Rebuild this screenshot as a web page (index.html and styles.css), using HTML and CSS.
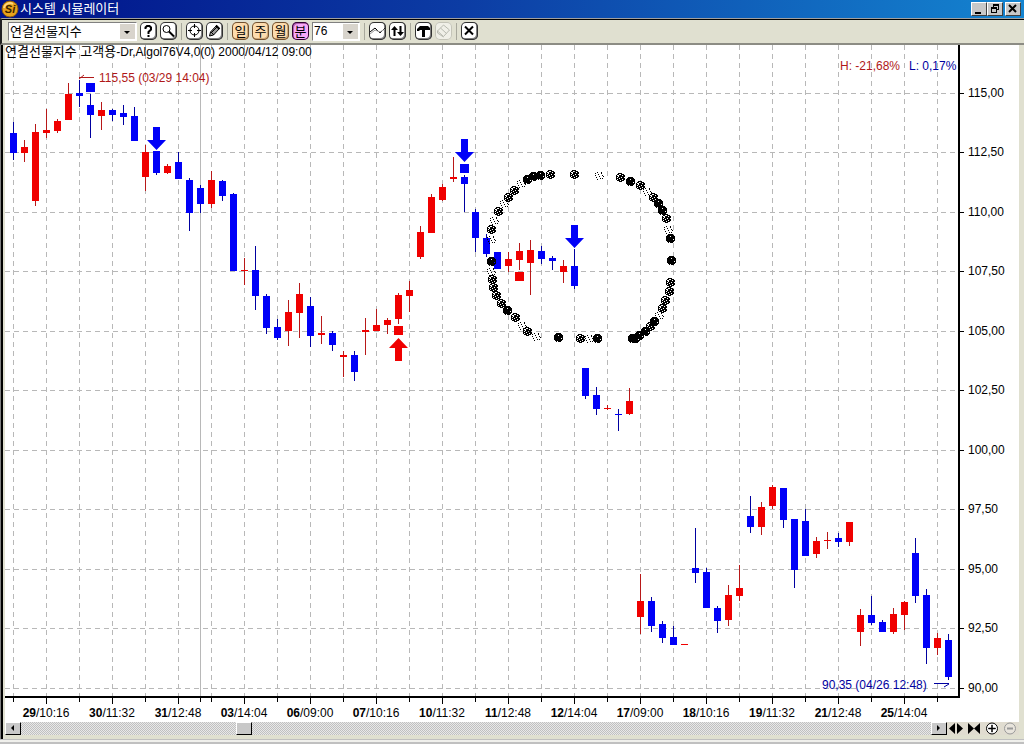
FILE: index.html
```html
<!DOCTYPE html>
<html lang="ko">
<head>
  <meta charset="UTF-8" />
  <meta name="viewport" content="width=device-width, initial-scale=1.0" />
  <title>시스템 시뮬레이터</title>
  <link rel="stylesheet" href="styles.css">
</head>
<body>
  <div class="window">
    <header class="titlebar">
      <svg class="logo" viewBox="0 0 18 18" aria-hidden="true">
        <circle cx="9" cy="9" r="8" fill="#e8a21c" stroke="#8a5a10" />
        <path d="M3 8a6 6 0 0 1 9-4" fill="none" stroke="#ffd97a" stroke-width="2" />
        <text x="9" y="13" text-anchor="middle" class="logo-text">Si</text>
      </svg>
      <h1>시스템 시뮬레이터</h1>
      <div class="window-buttons">
        <button type="button" aria-label="최소화"><svg viewBox="0 0 14 12"><path d="M3 9h6v2h-6z" /></svg></button>
        <button type="button" aria-label="이전 크기로"><svg viewBox="0 0 14 12"><path d="M5 1h6v6h-2v-1h1v-3h-4v1h-1zM3 4h6v6h-6zM4 6v3h4v-3z" fill-rule="evenodd" /></svg></button>
        <button type="button" class="close" aria-label="닫기"><svg viewBox="0 0 14 12"><path d="M3 2l7 7M10 2l-7 7" stroke="#000" stroke-width="2" /></svg></button>
      </div>
    </header>

    <div class="toolbar">
      <div class="combo combo-symbol">
        <select aria-label="종목"><option>연결선물지수</option></select>
      </div>
      <button type="button" class="tool" aria-label="도움말"><svg viewBox="0 0 17 18"><path d="M5.500 7V5.500L7 4h2.500L11 5.500v2L8.500 10v2M8.500 13v2" fill="none" stroke="#000" stroke-width="2" /></svg></button>
      <button type="button" class="tool" aria-label="찾기"><svg viewBox="0 0 17 18"><circle cx="6.500" cy="7" r="3.500" fill="#fff" stroke="#000" /><path d="M9 9.500l5 5" stroke="#000" stroke-width="2" /></svg></button>
      <span class="divider"></span>
      <button type="button" class="tool" aria-label="십자선"><svg viewBox="0 0 17 18"><circle cx="8.500" cy="8.500" r="4.500" fill="none" stroke="#000" /><path d="M8.500 2v4M8.500 11v4M2 8.500h4M11 8.500h4" stroke="#000" /></svg></button>
      <button type="button" class="tool" aria-label="그리기"><svg viewBox="0 0 17 18"><path d="M3.500 14l1-4 6-6.500 3 3-6 6.500z" fill="#999" stroke="#000" /><path d="M5 10l3 3M6 10l5-5" stroke="#000" /><path d="M10 3.500l3.500 3.500" stroke="#000" stroke-width="2" /></svg></button>
      <span class="divider"></span>
      <button type="button" class="tool period">일</button>
      <button type="button" class="tool period">주</button>
      <button type="button" class="tool period">월</button>
      <button type="button" class="tool period active" aria-pressed="true">분</button>
      <div class="combo combo-minute">
        <select aria-label="분 주기"><option>76</option></select>
      </div>
      <span class="divider"></span>
      <button type="button" class="tool" aria-label="지표"><svg viewBox="0 0 17 18"><path d="M1 10l5-4 5 5 5-5" fill="none" stroke="#000" /><path d="M1 12l5-4 5 2 5-3" fill="none" stroke="#999" /></svg></button>
      <button type="button" class="tool" aria-label="매매 신호"><svg viewBox="0 0 17 18"><path d="M2 8l3.500-4 3.500 4h-2.500v6h-2v-6zM8 10l3.500 4 3.500-4h-2.500v-6h-2v6z" /></svg></button>
      <span class="divider"></span>
      <button type="button" class="tool" aria-label="시스템"><svg viewBox="0 0 17 18"><path d="M2 7l3-3h8l2 2v2h-5v7h-3v-7h-2l-1 1h-2z" /></svg></button>
      <button type="button" class="tool" aria-label="지우기" disabled><svg viewBox="0 0 17 18"><path d="M2.500 9l6-6 6 5-6 6.500zM5.500 6l6 5.500M2.500 9v2l6 4" fill="none" stroke="#b8bab0" /></svg></button>
      <span class="divider"></span>
      <button type="button" class="tool" aria-label="차트 닫기"><svg viewBox="0 0 17 18"><path d="M4 4.500l8 8M12 4.500l-8 8" stroke="#000" stroke-width="2" /></svg></button>
    </div>

    <main class="panel">
      <svg id="chart" class="chart" viewBox="5 45 1014 677" role="img" aria-label="연결선물지수 76분 차트"></svg>
      <div class="scrollbar">
        <button type="button" class="scroll-btn" aria-label="왼쪽"><svg viewBox="0 0 14 11"><path d="M8 2v6l-3-3z" /></svg></button>
        <input type="range" min="0" max="100" value="24" aria-label="차트 위치">
        <button type="button" class="scroll-btn" aria-label="오른쪽"><svg viewBox="0 0 14 11"><path d="M5 2v6l3-3z" /></svg></button>
        <button type="button" class="zoom-btn" aria-label="간격 넓게"><svg viewBox="0 0 18 13"><path d="M8 1v11l-6-5.500zM10 1v11l6-5.500z" /></svg></button>
        <button type="button" class="zoom-btn" aria-label="간격 좁게"><svg viewBox="0 0 18 13"><path d="M3 1v11l6-5.500zM15 1v11l-6-5.500z" /></svg></button>
        <button type="button" class="zoom-btn" aria-label="확대"><svg viewBox="0 0 18 13"><circle cx="9" cy="6.500" r="5.500" fill="#fff" stroke="#000" /><path d="M8.500 3h1v7h-1zM5.500 6h7v1h-7z" stroke="#000" stroke-width=".5" /></svg></button>
        <button type="button" class="zoom-btn" aria-label="축소" disabled><svg viewBox="0 0 18 13"><circle cx="9" cy="6.500" r="5.500" fill="#e8e4dc" stroke="#999" /><path d="M6 5.500h6v2h-6z" fill="#999" /></svg></button>
      </div>
    </main>
  </div>
  <script src="chart.js"></script>
</body>
</html>
```

FILE: styles.css
```css
* {
  box-sizing: border-box;
}
body {
  margin: 0;
  background: #c0c0c0;
  font-family: "Liberation Sans", "Noto Sans CJK KR", sans-serif;
  font-size: 12px;
  color: #000;
}
button {
  padding: 0;
  font: inherit;
  color: inherit;
}
button svg {
  display: block;
  width: 100%;
  height: 100%;
}
.window {
  background: #f0f0ec;
  border-bottom: 2px solid #c0c0c0;
}

/* title bar */
.titlebar {
  display: flex;
  align-items: center;
  height: 18px;
  padding: 0 3px 0 1px;
  background: linear-gradient(90deg, #00128a, #0c3ca4 45%, #1484d0);
}
.logo {
  width: 18px;
  height: 18px;
}
.logo-text {
  font-size: 11px;
  font-weight: bold;
  font-style: italic;
  fill: #3a2400;
}
.titlebar h1 {
  flex: 1;
  margin: 0 0 0 1px;
  font-size: 13px;
  font-weight: normal;
  line-height: 18px;
  color: #fff;
}
.window-buttons {
  display: flex;
}
.window-buttons button {
  width: 16px;
  height: 14px;
  background: #c8c8c8;
  border: 1px solid;
  border-color: #fff #404040 #404040 #fff;
}
.window-buttons .close {
  margin-left: 2px;
}

/* toolbar */
.toolbar {
  display: flex;
  align-items: center;
  gap: 3px;
  height: 27px;
  padding: 0 7px 0 6px;
  border-top: 1px solid #a0a0a0;
  border-bottom: 2px solid #8c8c84;
  border-left: 2px solid #202020;
  background: #e0e0d0;
  box-shadow: inset 0 1px #000;
}
.combo {
  position: relative;
  height: 19px;
  background: #fff;
  border: 1px solid;
  border-color: #808080 #fff #fff #808080;
}
.combo-symbol {
  width: 129px;
}
.combo-minute {
  width: 48px;
}
.combo select {
  appearance: none;
  width: 100%;
  height: 17px;
  padding: 0 18px 0 1px;
  border: 0;
  background: none;
  font: inherit;
  line-height: 17px;
  color: #000;
}
.combo-symbol select {
  font-size: 13px;
}
.combo::before {
  content: "";
  position: absolute;
  top: 1px;
  right: 1px;
  bottom: 1px;
  width: 15px;
  background: #d8d4cc;
}
.combo::after {
  content: "";
  position: absolute;
  top: 8px;
  right: 6px;
  border: 3px solid transparent;
  border-top-color: #000;
  border-bottom: 0;
  pointer-events: none;
}
.tool {
  width: 17px;
  height: 18px;
  background: #fff;
  border: 0;
  border-radius: 5px;
  box-shadow: inset 0 0 0 1px #303030, inset -1px -1px 0 1px #808080;
}
.tool:disabled {
  background: #f0f0e8;
  box-shadow: inset 0 0 0 1px #c4c4b8;
}
.period {
  font-size: 13px;
  line-height: 17px;
  background: #fddcae;
  box-shadow: inset 0 0 0 1px #705030, inset -1px -1px 0 1px #d0a878;
}
.period.active {
  background: #f8a8f8;
  box-shadow: inset 0 0 0 1px #300030, inset 1px 1px 0 1px #b060b0;
}
.divider {
  width: 1px;
  height: 17px;
  margin: 0 1px;
  background: #a8a89c;
}

/* chart */
.panel {
  background: #fff;
  margin-bottom: 3px;
  border-left: 5px solid #e0e0d0;
  border-right: 5px solid #e0e0d8;
  border-bottom: 4px solid #e0e0d8;
  box-shadow: inset 0 -1px #fff, 0 1px #c0c0c0;
  background-clip: padding-box;
  border-image: linear-gradient(90deg, #808080 1px, #000 1px 3px, #e0e0d0 3px) 1 5 4 5;
}
.chart {
  display: block;
  width: 100%;
  background: #fff;
  font-size: 12px;
}
.grid {
  stroke: #b8b8b8;
  stroke-dasharray: 5 4;
  fill: none;
}
.cursor {
  stroke: #b8b8b8;
}
.axis {
  stroke: #000;
  stroke-width: 2;
}
.tick {
  stroke: #000;
}
.up {
  fill: #f00000;
}
.down {
  fill: #0000f8;
}
.wick-up {
  fill: #b81818;
}
.wick-down {
  fill: #0000a0;
}
.day {
  font-weight: bold;
}
.korean {
  font-size: 13px;
}
.middle {
  text-anchor: middle;
}
.note-high {
  fill: #b01818;
}
.note-low {
  fill: #0000a0;
}
.pointer-high {
  stroke: #b01818;
  fill: none;
}
.pointer-low {
  stroke: #0000a0;
  fill: none;
}

/* scrollbar */
.scrollbar {
  display: flex;
  height: 13px;
  background: #e0dcd0;
}
.scroll-btn {
  width: 16px;
  height: 13px;
  background: #c8c8c8;
  border: 1px solid;
  border-color: #fff #000 #000 #fff;
}
.scrollbar input {
  appearance: none;
  flex: 1;
  min-width: 0;
  height: 13px;
  margin: 0;
  background: repeating-conic-gradient(#c0c0c0 0 25%, #e8e8e8 0 50%) 0 0 / 2px 2px;
}
.scrollbar input::-webkit-slider-thumb {
  appearance: none;
  width: 16px;
  height: 13px;
  background: #c8c8c8;
  border: 1px solid;
  border-color: #fff #000 #000 #fff;
}
.zoom-btn {
  width: 18px;
  height: 13px;
  background: none;
  border: 0;
}
```

FILE: chart.js
```js
// [open/close top, bottom, high, low, direction] in chart units, one bar every 11 units
const bars = [
  [133, 153, 122, 160, 'd'], [147, 153, 140, 162, 'u'], [132, 201, 124, 206, 'u'], [130, 133, 109, 138, 'u'],
  [121, 131, 119, 133, 'u'], [94, 120, 83, 120, 'u'], [93, 96, 80, 107, 'd'], [105, 115, 94, 138, 'd'],
  [110, 116, 102, 130, 'u'], [110, 115, 109, 121, 'd'], [113, 117, 105, 125, 'd'], [116, 141, 107, 141, 'd'],
  [152, 177, 145, 191, 'u'], [151, 173, 151, 175, 'd'], [166, 173, 164, 174, 'u'], [162, 179, 152, 179, 'd'],
  [180, 213, 178, 231, 'd'], [188, 204, 185, 213, 'd'], [180, 204, 171, 208, 'u'], [181, 196, 180, 201, 'd'],
  [194, 271, 193, 271, 'd'], [270, 271, 258, 285, 'u'], [270, 296, 246, 310, 'd'], [296, 328, 294, 334, 'd'],
  [327, 338, 319, 340, 'd'], [312, 331, 300, 346, 'u'], [294, 313, 283, 338, 'u'], [306, 336, 297, 347, 'd'],
  [333, 335, 316, 344, 'u'], [333, 345, 331, 351, 'd'], [355, 357, 351, 377, 'u'], [355, 372, 351, 381, 'd'],
  [330, 332, 318, 355, 'u'], [325, 331, 309, 331, 'u'], [320, 325, 318, 334, 'u'], [295, 319, 293, 324, 'u'],
  [290, 296, 281, 312, 'u'], [232, 257, 226, 259, 'u'], [197, 233, 194, 233, 'u'], [187, 200, 184, 201, 'u'],
  [177, 179, 157, 182, 'u'], [177, 184, 175, 212, 'd'], [212, 238, 209, 252, 'd'], [238, 254, 234, 257, 'd'],
  [252, 269, 252, 269, 'd'], [259, 266, 252, 272, 'u'], [251, 260, 243, 270, 'u'], [250, 263, 240, 295, 'u'],
  [251, 259, 246, 264, 'd'], [258, 261, 256, 270, 'd'], [266, 272, 260, 283, 'u'], [266, 286, 249, 289, 'd'],
  [368, 396, 368, 399, 'd'], [395, 409, 387, 415, 'd'], [408, 409, 405, 410, 'u'], [414, 415, 409, 431, 'd'],
  [401, 414, 388, 415, 'u'], [601, 617, 574, 634, 'u'], [601, 626, 597, 632, 'd'], [624, 638, 621, 643, 'd'],
  [637, 645, 626, 645, 'd'], [644, 645, 644, 645, 'u'], [568, 573, 528, 583, 'd'], [572, 608, 568, 608, 'd'],
  [608, 621, 606, 633, 'd'], [595, 620, 585, 626, 'u'], [588, 596, 565, 601, 'u'], [516, 527, 496, 533, 'd'],
  [507, 527, 502, 535, 'u'], [487, 506, 485, 509, 'u'], [488, 520, 488, 528, 'd'], [519, 570, 519, 588, 'd'],
  [521, 556, 509, 556, 'd'], [541, 554, 537, 558, 'u'], [540, 541, 532, 549, 'u'], [538, 542, 533, 547, 'd'],
  [522, 542, 522, 546, 'u'], [615, 632, 609, 646, 'u'], [615, 623, 596, 625, 'd'], [622, 632, 620, 632, 'd'],
  [614, 632, 608, 634, 'u'], [602, 615, 601, 630, 'u'], [553, 596, 538, 603, 'd'], [595, 648, 589, 664, 'd'],
  [638, 648, 633, 655, 'u'], [640, 677, 634, 680, 'd']
];

const prices = ['115,00', '112,50', '110,00', '107,50', '105,00', '102,50', '100,00', '97,50', '95,00', '92,50', '90,00'];
const priceY = [93, 152, 212, 271, 331, 390, 450, 509, 569, 628, 688];
const times = ['29/10:16', '30/11:32', '31/12:48', '03/14:04', '06/09:00', '07/10:16', '10/11:32',
  '11/12:48', '12/14:04', '17/09:00', '18/10:16', '19/11:32', '21/12:48', '25/14:04'];

// hand-sprayed marker stamps: heavy, medium, faint
const stamps = {
  h: ['..#####..', '.#######.', '####.####', '#########', '#########', '#######.#', '#########', '.#######.', '..#.###..'],
  m: ['..####...', '.##..###.', '#..###.##', '##.######', '#.###.##.', '###.#####', '#.####.##', '.###.###.', '...###...'],
  f: ['.........', '..#...#..', '#.....#..', '...#.....', '#......#.', '....#...#', '.#.......', '.....#.#.', '..#......']
};
const spray = [
  [550, 174, 'm'], [540, 175, 'h'], [533, 176, 'h'], [527, 179, 'h'], [521, 183, 'f'], [514, 190, 'm'], [508, 197, 'm'],
  [504, 203, 'f'], [498, 211, 'm'], [494, 220, 'f'], [491, 229, 'm'], [491, 239, 'f'], [491, 261, 'h'], [491, 271, 'f'],
  [492, 279, 'm'], [493, 287, 'm'], [496, 295, 'm'], [501, 303, 'm'], [507, 310, 'h'], [515, 317, 'm'], [522, 325, 'f'],
  [527, 331, 'm'], [536, 336, 'f'], [558, 337, 'h'], [580, 338, 'm'], [589, 338, 'f'], [597, 338, 'h'],
  [574, 174, 'm'], [599, 175, 'f'], [620, 177, 'm'], [630, 181, 'h'], [640, 185, 'm'], [647, 191, 'f'], [653, 197, 'm'],
  [658, 203, 'h'], [662, 210, 'h'], [666, 218, 'm'], [668, 229, 'f'], [670, 238, 'h'], [671, 260, 'h'], [670, 282, 'm'],
  [669, 291, 'm'], [665, 300, 'm'], [662, 308, 'm'], [659, 315, 'f'], [654, 321, 'h'], [650, 326, 'm'], [645, 331, 'h'],
  [639, 335, 'h'], [635, 338, 'h'], [632, 338, 'h']
];

let out = '';

// grid
for (const y of priceY) {
  out += `<path class="grid" d="M5 ${y + 0.5}H958" /><path class="tick" d="M960 ${y + 0.5}h4" />`;
}
for (let x = 13; x < 958; x += 33) {
  const len = (x - 46) % 66 === 0 ? 6 : 4;
  out += `<path class="grid" d="M${x + 0.5} 45V696" /><path class="tick" d="M${x + 0.5} 698v${len}" />`;
}
out += '<path class="cursor" d="M200.5 45V696" /><path class="tick" d="M200.5 698v4" />';
out += '<path class="axis" d="M959 45V698M5 697H960" />';

// labels
prices.forEach((p, i) => {
  out += `<text x="968" y="${priceY[i] + 4}">${p}</text>`;
});
times.forEach((t, i) => {
  const [day, time] = t.split('/');
  out += `<text class="middle" x="${46 + i * 66}" y="717"><tspan class="day">${day}</tspan>/${time}</text>`;
});

// candles
bars.forEach(([top, bottom, high, low, dir], i) => {
  const x = 13 + i * 11;
  const cls = dir === 'u' ? 'up' : 'down';
  out += `<rect class="wick-${cls}" x="${x}" y="${high}" width="1" height="${low - high}" />`;
  out += `<rect class="${cls}" x="${x - 3}" y="${top}" width="7" height="${bottom - top}" />`;
});

// signals
[[90, 83, 'down'], [464, 164, 'down'], [398, 326, 'up'], [519, 272, 'up']].forEach(([x, y, cls]) => {
  out += `<rect class="${cls}" x="${x - 4}" y="${y}" width="9" height="9" />`;
});
[[156, 127], [464, 139], [574, 225]].forEach(([x, y]) => {
  out += `<path class="down" d="M${x - 3} ${y}h7v13h6l-9.500 10-9.500-10h6z" />`;
});
out += '<path class="up" d="M395 361h7v-13h6l-9.500-10-9.500 10h6z" />';

// spray circle
let dots = '';
for (const [cx, cy, kind] of spray) {
  stamps[kind].forEach((row, r) => {
    [...row].forEach((c, col) => {
      if (c === '#') dots += `M${cx - 4 + col} ${cy - 4 + r}h1v1h-1z`;
    });
  });
}
out += `<path d="${dots}" />`;

// notes
out += '<text x="5" y="56"><tspan class="korean">연결선물지수 고객용</tspan>-Dr,Algol76V4,0(0) 2000/04/12 09:00</text>';
out += '<text class="note-high" x="99" y="82">115,55 (03/29 14:04)</text>';
out += '<path class="pointer-high" d="M94 77.500H79M79 79l5-4" />';
out += '<text class="note-high" x="840" y="70">H: -21,68%</text>';
out += '<text class="note-low" x="909" y="70">L: 0,17%</text>';
out += '<text class="note-low" x="822" y="689">90,35 (04/26 12:48)</text>';
out += '<path class="pointer-low" d="M934 683.500H949M949 684l-5 3" />';

document.getElementById('chart').innerHTML = out;
```
